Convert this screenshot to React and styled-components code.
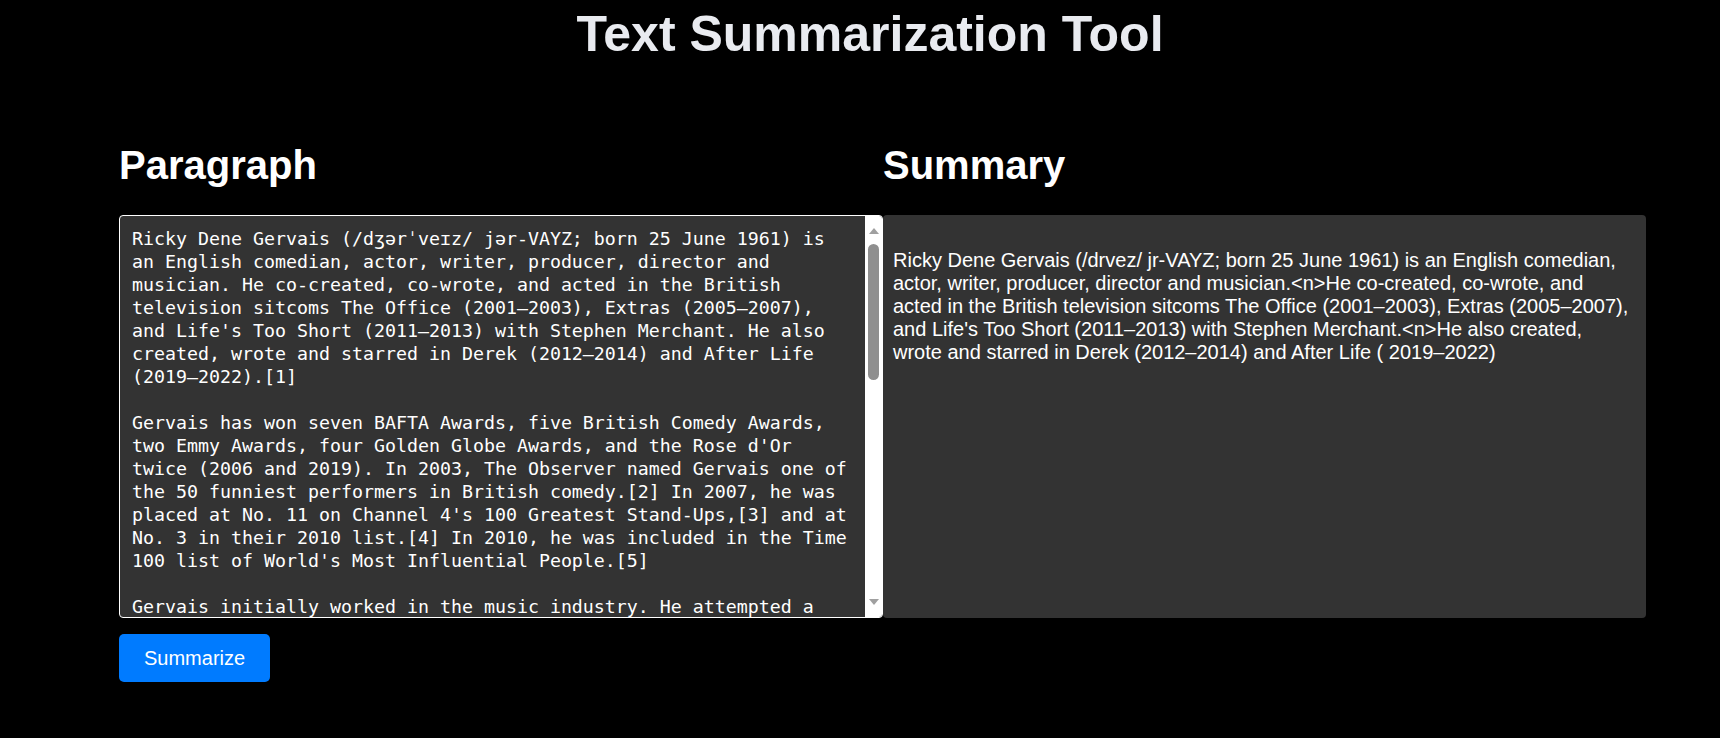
import styled, { createGlobalStyle } from "styled-components";

const GlobalStyle = createGlobalStyle`
  body {
    margin: 0;
    background: #000;
    font-family: "Liberation Sans", Arial, sans-serif;
  }
`;

const Page = styled.main`
  min-height: 738px;
  background: #000;
`;

const Title = styled.h1`
  margin: 0;
  padding: 5px 0 0 20px;
  color: #e9ebf0;
  font-size: 50px;
  font-weight: 700;
  line-height: normal;
  text-align: center;
`;

const Columns = styled.section`
  display: grid;
  grid-template-columns: 764px 763px;
  margin-top: 80px;
  padding-left: 119px;
`;

const Column = styled.div`
  display: flex;
  flex-direction: column;
  align-items: flex-start;
`;

const Heading = styled.h2`
  margin: 0 0 27px;
  color: #fff;
  font-size: 40px;
  font-weight: 700;
  line-height: normal;
`;

const InputFrame = styled.div`
  position: relative;
  width: 764px;
  height: 403px;
`;

const ParagraphInput = styled.textarea`
  box-sizing: border-box;
  display: block;
  width: 100%;
  height: 100%;
  padding: 11px 29px 10px 12px;
  border: 1px solid #fff;
  border-radius: 4px;
  background: #333;
  color: #fff;
  font-family: "DejaVu Sans Mono", "Liberation Mono", monospace;
  font-size: 18.27px;
  line-height: 23px;
  resize: none;
  outline: none;
  overflow: hidden;
`;

/* drawn scrollbar, laid over the textarea's right edge */
const ScrollTrack = styled.div`
  position: absolute;
  top: 1px;
  right: 1px;
  bottom: 1px;
  width: 17px;
  display: flex;
  flex-direction: column;
  align-items: center;
  padding: 12px 0 12px;
  box-sizing: border-box;
  background: #fff;
  border-radius: 0 3px 3px 0;
`;

const Arrow = styled.span`
  width: 0;
  height: 0;
  border-left: 5px solid transparent;
  border-right: 5px solid transparent;
  ${({ $down }) =>
    $down
      ? "border-top: 6px solid #a0a0a0; margin-top: auto;"
      : "border-bottom: 6px solid #a0a0a0;"}
`;

const Thumb = styled.span`
  margin-top: 10px;
  width: 11px;
  height: 136px;
  border-radius: 6px;
  background: #8f8f8f;
`;

const SummarizeButton = styled.button`
  margin-top: 16px;
  height: 48px;
  padding: 0 25px;
  border: none;
  border-radius: 5px;
  background: #007bff;
  color: #fff;
  font-family: "Liberation Sans", Arial, sans-serif;
  font-size: 20px;
  cursor: pointer;
`;

const SummaryBox = styled.div`
  box-sizing: border-box;
  width: 763px;
  height: 403px;
  padding: 14px 10px;
  border-radius: 4px;
  background: #333;
  color: #fff;
`;

const SummaryText = styled.p`
  margin: 20px 0;
  font-size: 20px;
  line-height: normal;
`;

const paragraph = `Ricky Dene Gervais (/dʒərˈveɪz/ jər-VAYZ; born 25 June 1961) is an English comedian, actor, writer, producer, director and musician. He co-created, co-wrote, and acted in the British television sitcoms The Office (2001–2003), Extras (2005–2007), and Life's Too Short (2011–2013) with Stephen Merchant. He also created, wrote and starred in Derek (2012–2014) and After Life (2019–2022).[1]

Gervais has won seven BAFTA Awards, five British Comedy Awards, two Emmy Awards, four Golden Globe Awards, and the Rose d'Or twice (2006 and 2019). In 2003, The Observer named Gervais one of the 50 funniest performers in British comedy.[2] In 2007, he was placed at No. 11 on Channel 4's 100 Greatest Stand-Ups,[3] and at No. 3 in their 2010 list.[4] In 2010, he was included in the Time 100 list of World's Most Influential People.[5]

Gervais initially worked in the music industry. He attempted a career as a pop star in the 1980s as the singer of new wave duo Seona Dancing, and later became the manager of Suede. He then moved into radio as head of speech at the London station XFM, where he met Stephen Merchant and Karl Pilkington, with whom he later created The Ricky Gervais Show, a radio series that became one of the most downloaded podcasts in the world.[6]

As a stand-up comedian, Gervais has performed the tours Animals (2003), Politics (2004), Fame (2007), Science (2010), Humanity (2018), SuperNature (2022) and Armageddon (2023), several of which were released as Netflix specials. He has hosted the Golden Globe Awards five times, in 2010, 2011, 2012, 2016 and 2020.[7]

His film career includes writing and directing The Invention of Lying (2009) and Cemetery Junction (2010), starring in Ghost Town (2008), and appearing in the Night at the Museum films as Dr. McPhee. He has also written a series of children's books, Flanimals, and is an outspoken advocate of animal rights.[8]

In 2022, Gervais received the Charlie Chaplin Britannia Award for Excellence in Comedy. His work is known for its awkward humour and documentary style.[9]`;

const summary =
  "Ricky Dene Gervais (/drvez/ jr-VAYZ; born 25 June 1961) is an English comedian, actor, writer, producer, director and musician.<n>He co-created, co-wrote, and acted in the British television sitcoms The Office (2001–2003), Extras (2005–2007), and Life's Too Short (2011–2013) with Stephen Merchant.<n>He also created, wrote and starred in Derek (2012–2014) and After Life ( 2019–2022)";

export default function App() {
  return (
    <Page>
      <GlobalStyle />
      <Title>Text Summarization Tool</Title>
      <Columns>
        <Column>
          <Heading>Paragraph</Heading>
          <InputFrame>
            <ParagraphInput defaultValue={paragraph} spellCheck={false} />
            <ScrollTrack>
              <Arrow />
              <Thumb />
              <Arrow $down />
            </ScrollTrack>
          </InputFrame>
          <SummarizeButton>Summarize</SummarizeButton>
        </Column>
        <Column>
          <Heading>Summary</Heading>
          <SummaryBox>
            <SummaryText>{summary}</SummaryText>
          </SummaryBox>
        </Column>
      </Columns>
    </Page>
  );
}
